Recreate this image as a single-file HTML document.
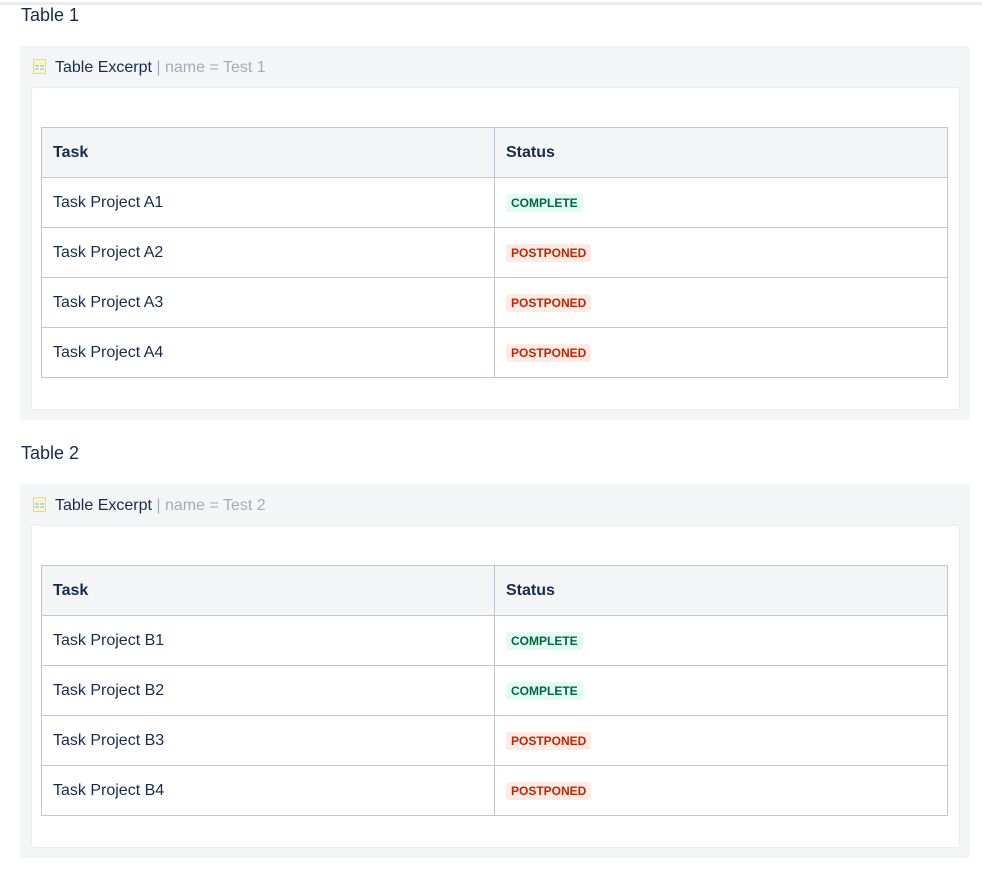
<!DOCTYPE html>
<html><head><style>
body{margin:0;width:982px;height:869px;background:#fff;font-family:"Liberation Sans",sans-serif;color:#172b4d;position:relative;overflow:hidden}
.topline{position:absolute;left:0;top:2px;width:982px;height:3px;background:#ebecf0}
.lbl{position:absolute;left:21px;font-size:18px;color:#172b4d}
.panel{position:absolute;left:20px;width:950px;height:374px;background:#f4f5f7;border-radius:3px}
.hdr{position:absolute;left:35px;top:12px;font-size:16px;color:#172b4d;line-height:20px}
.hdr span{color:#a5adba}
.icon{position:absolute;left:13px;top:13px;width:13px;height:15px}
.inner{position:absolute;left:11px;top:41px;width:929px;height:323px;background:#fff;border:1px solid #ebecf0;border-radius:3px;box-sizing:border-box}
table{position:absolute;left:9px;top:39px;width:907px;border-collapse:collapse;font-size:16px}
td,th{border:1px solid #c1c7d0;height:49px;padding:0 11px;text-align:left;vertical-align:middle;width:50%}
th{background:#f4f5f7;font-weight:bold}
.b{display:inline-block;font-size:12px;font-weight:bold;padding:1px 5px;border-radius:3px;line-height:16px}
.c{background:#e3fcef;color:#006644}
.p{background:#ffebe6;color:#bf2600}
</style></head><body>
<div class="topline"></div>
<div class="lbl" style="top:5px">Table 1</div>
<div class="panel" style="top:46px">
<svg class="icon" viewBox="0 0 13 15"><rect x="0.5" y="0.5" width="12" height="14" fill="#fdf6c3" stroke="#e8d98a"/><rect x="2" y="6" width="9" height="5" fill="#b3d4f5"/><line x1="2" y1="8.5" x2="11" y2="8.5" stroke="#fff"/><line x1="6.5" y1="6" x2="6.5" y2="11" stroke="#fff"/></svg>
<div class="hdr">Table Excerpt <span>| name = Test 1</span></div>
<div class="inner"><table>
<tr><th>Task</th><th>Status</th></tr>
<tr><td>Task Project A1</td><td><span class="b c">COMPLETE</span></td></tr>
<tr><td>Task Project A2</td><td><span class="b p">POSTPONED</span></td></tr>
<tr><td>Task Project A3</td><td><span class="b p">POSTPONED</span></td></tr>
<tr><td>Task Project A4</td><td><span class="b p">POSTPONED</span></td></tr>
</table></div></div>
<div class="lbl" style="top:443px">Table 2</div>
<div class="panel" style="top:484px">
<svg class="icon" viewBox="0 0 13 15"><rect x="0.5" y="0.5" width="12" height="14" fill="#fdf6c3" stroke="#e8d98a"/><rect x="2" y="6" width="9" height="5" fill="#b3d4f5"/><line x1="2" y1="8.5" x2="11" y2="8.5" stroke="#fff"/><line x1="6.5" y1="6" x2="6.5" y2="11" stroke="#fff"/></svg>
<div class="hdr">Table Excerpt <span>| name = Test 2</span></div>
<div class="inner"><table>
<tr><th>Task</th><th>Status</th></tr>
<tr><td>Task Project B1</td><td><span class="b c">COMPLETE</span></td></tr>
<tr><td>Task Project B2</td><td><span class="b c">COMPLETE</span></td></tr>
<tr><td>Task Project B3</td><td><span class="b p">POSTPONED</span></td></tr>
<tr><td>Task Project B4</td><td><span class="b p">POSTPONED</span></td></tr>
</table></div></div>
</body></html>
